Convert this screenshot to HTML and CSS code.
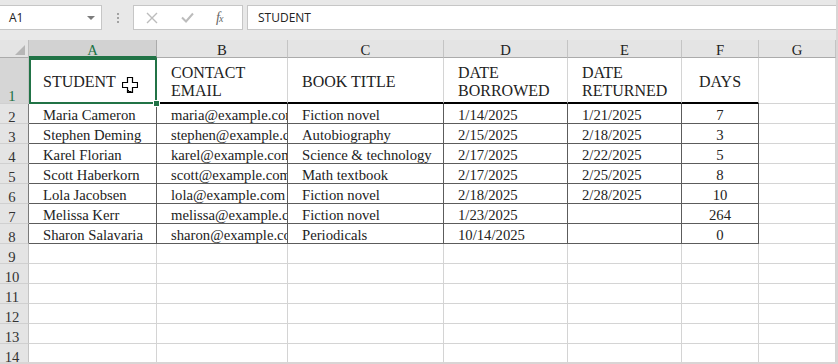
FILE: index.html
```html
<!DOCTYPE html>
<html>
<head>
<meta charset="utf-8">
<link rel="stylesheet" href="styles.css">
</head>
<body>
<div class="app">
  <div class="toolbar">
    <div class="namebox"><span>A1</span><span class="caret"></span></div>
    <div class="dots"><i></i><i></i><i></i></div>
    <div class="fxbtns">
      <svg class="ico-x" width="12" height="12" viewBox="0 0 12 12"><path d="M1 1 L11 11 M11 1 L1 11" stroke="#bcbcbc" stroke-width="1.4" fill="none"/></svg>
      <svg class="ico-ok" width="13" height="11" viewBox="0 0 13 11"><path d="M1 5.5 L5 9.5 L12 1.5" stroke="#bcbcbc" stroke-width="2" fill="none"/></svg>
      <span class="fx">f<small>x</small></span>
    </div>
    <div class="formula">STUDENT</div>
  </div>
  <div class="sheet">
    <div class="corner"><span class="tri"></span></div>
    <div class="ch sel">A</div><div class="ch">B</div><div class="ch">C</div><div class="ch">D</div><div class="ch">E</div><div class="ch">F</div><div class="ch">G</div>

    <div class="rh sel">1</div>
    <div class="c h active">STUDENT
      <svg class="cursor" width="16" height="16" viewBox="0 0 16 16"><path d="M5.5 0.5 H10.5 V5.5 H15.5 V10.5 H10.5 V15.5 H5.5 V10.5 H0.5 V5.5 H5.5 Z" fill="#fff" stroke="#000" stroke-width="1.2"/><path d="M6.5 13 V14.5 H9.5" stroke="#000" stroke-width="1" fill="none"/></svg>
      <span class="handle"></span>
    </div>
    <div class="c h">CONTACT<br>EMAIL</div>
    <div class="c h">BOOK TITLE</div>
    <div class="c h">DATE<br>BORROWED</div>
    <div class="c h">DATE<br>RETURNED</div>
    <div class="c h n">DAYS</div>
    <div class="c"></div>

    <div class="rh t">2</div>
    <div class="c t">Maria Cameron</div><div class="c t">maria@example.com</div><div class="c t">Fiction novel</div><div class="c t">1/14/2025</div><div class="c t">1/21/2025</div><div class="c t n">7</div><div class="c"></div>

    <div class="rh t">3</div>
    <div class="c t">Stephen Deming</div><div class="c t">stephen@example.com</div><div class="c t">Autobiography</div><div class="c t">2/15/2025</div><div class="c t">2/18/2025</div><div class="c t n">3</div><div class="c"></div>

    <div class="rh t">4</div>
    <div class="c t">Karel Florian</div><div class="c t">karel@example.com</div><div class="c t">Science &amp; technology</div><div class="c t">2/17/2025</div><div class="c t">2/22/2025</div><div class="c t n">5</div><div class="c"></div>

    <div class="rh t">5</div>
    <div class="c t">Scott Haberkorn</div><div class="c t">scott@example.com</div><div class="c t">Math textbook</div><div class="c t">2/17/2025</div><div class="c t">2/25/2025</div><div class="c t n">8</div><div class="c"></div>

    <div class="rh t">6</div>
    <div class="c t">Lola Jacobsen</div><div class="c t">lola@example.com</div><div class="c t">Fiction novel</div><div class="c t">2/18/2025</div><div class="c t">2/28/2025</div><div class="c t n">10</div><div class="c"></div>

    <div class="rh t">7</div>
    <div class="c t">Melissa Kerr</div><div class="c t">melissa@example.com</div><div class="c t">Fiction novel</div><div class="c t">1/23/2025</div><div class="c t"></div><div class="c t n">264</div><div class="c"></div>

    <div class="rh t">8</div>
    <div class="c t">Sharon Salavaria</div><div class="c t">sharon@example.com</div><div class="c t">Periodicals</div><div class="c t">10/14/2025</div><div class="c t"></div><div class="c t n">0</div><div class="c"></div>

    <div class="rh">9</div><div class="c"></div><div class="c"></div><div class="c"></div><div class="c"></div><div class="c"></div><div class="c"></div><div class="c"></div>
    <div class="rh">10</div><div class="c"></div><div class="c"></div><div class="c"></div><div class="c"></div><div class="c"></div><div class="c"></div><div class="c"></div>
    <div class="rh">11</div><div class="c"></div><div class="c"></div><div class="c"></div><div class="c"></div><div class="c"></div><div class="c"></div><div class="c"></div>
    <div class="rh">12</div><div class="c"></div><div class="c"></div><div class="c"></div><div class="c"></div><div class="c"></div><div class="c"></div><div class="c"></div>
    <div class="rh">13</div><div class="c"></div><div class="c"></div><div class="c"></div><div class="c"></div><div class="c"></div><div class="c"></div><div class="c"></div>
    <div class="rh">14</div><div class="c"></div><div class="c"></div><div class="c"></div><div class="c"></div><div class="c"></div><div class="c"></div><div class="c"></div>
  </div>
</div>
</body>
</html>
```
FILE: styles.css
```css
* { box-sizing: border-box; margin: 0; padding: 0; }
html, body { width: 838px; height: 364px; overflow: hidden; background: #fff; }
body { font-family: "Liberation Serif", "Times New Roman", serif; color: #222; }

.app {
  width: 838px; height: 364px;
  border-right: 2px solid #d9d5d5;
  border-bottom: 2px solid #d9d5d5;
  display: flex; flex-direction: column;
  overflow: hidden;
  background: #e8e8e8;
}

/* toolbar */
.toolbar {
  height: 40px; flex: none;
  display: flex; align-items: flex-start;
  padding-top: 5px;
  background: #e8e8e8;
  font-family: "Open Sans", "Liberation Sans", sans-serif;
  font-size: 12px; color: #222;
}
.namebox {
  width: 103px; height: 25px; margin-left: -1px;
  background: #fff; border: 1px solid #c6c6c6;
  display: flex; align-items: center;
  padding-left: 9px;
}
.caret {
  margin-left: auto; margin-right: 6px;
  width: 0; height: 0;
  border-left: 4px solid transparent;
  border-right: 4px solid transparent;
  border-top: 4px solid #7c7c7c;
}
.dots {
  width: 31px; height: 25px;
  display: flex; flex-direction: column; align-items: center;
  gap: 2px; padding-top: 8px;
}
.dots i { display: block; width: 2px; height: 2px; background: #a2a2a2; }
.fxbtns {
  width: 110px; height: 25px;
  background: #fff; border: 1px solid #c6c6c6;
  display: flex; align-items: center;
  padding-left: 12px;
}
.ico-x { margin-right: 23px; }
.ico-ok { margin-right: 22px; }
.fx {
  font-family: "Liberation Serif", serif; font-style: italic;
  font-size: 14px; color: #666; letter-spacing: -1px;
}
.fx small { font-size: 10px; }
.formula {
  flex: 1; height: 25px; margin-left: 4px;
  background: #fff; border: 1px solid #c6c6c6; border-right: none;
  display: flex; align-items: center;
  padding-left: 10px;
}

/* sheet */
.sheet {
  flex: none;
  display: grid;
  grid-template-columns: 29px 128px 131px 156px 124px 114px 77px 77px;
  grid-template-rows: 18px 46px repeat(13, 20px);
  background: #fff;
  font-size: 14.7px;
}
.corner {
  position: relative;
  background: #e4e4e4;
  border-right: 1px solid #bdbdbd;
  border-bottom: 1px solid #ababab;
}
.tri {
  position: absolute; right: 3px; bottom: 2px;
  width: 0; height: 0;
  border-left: 10px solid transparent;
  border-bottom: 10px solid #b6b6b6;
}
.ch {
  background: #e4e4e4;
  border-right: 1px solid #c4c4c4;
  border-bottom: 1px solid #ababab;
  text-align: center;
  line-height: 14px; padding-top: 3px;
  color: #222;
}
.ch.sel {
  background: #d2d2d2;
  color: #217346;
  border-bottom: 2px solid #217346;
  border-right-color: #ababab;
}
.rh {
  background: #e4e4e4;
  border-right: 1px solid #c4c4c4;
  border-bottom: 1px solid #d0d0d0;
  display: flex; align-items: flex-end; justify-content: center;
  padding-right: 4px;
  line-height: 12px;
  color: #333;
  font-size: 14.7px;
}
.rh.t { border-right-color: #7a7a7a; }
.rh.sel { background: #d6d6d6; color: #217346; line-height: 13px; }

.c {
  border-right: 1px solid #d4d4d4;
  border-bottom: 1px solid #d4d4d4;
  padding-left: 14px;
  white-space: nowrap;
  overflow-x: clip; overflow-y: visible;
  line-height: 16px; padding-top: 3px;
  color: #222;
}
.c.t { border-right-color: #5c5c5c; border-bottom-color: #5c5c5c; }
.c.h {
  border-bottom: 2px solid #000;
  font-size: 16px; line-height: 18px;
  display: flex; align-items: center;
  padding-top: 4px;
}
.c.n { padding-left: 0; text-align: center; }
.c.h.n { justify-content: center; }

.c.active { position: relative; overflow: visible; }
.c.active::after {
  content: ""; position: absolute;
  left: 0; top: 0; right: -1px; bottom: -2px;
  border: 2px solid #217346;
  z-index: 2;
}
.cursor { position: absolute; left: 93px; top: 19px; z-index: 3; }
.handle {
  position: absolute; left: 124px; top: 42px;
  width: 7px; height: 7px;
  background: #217346; border: 1px solid #fff;
  z-index: 4;
}
```
